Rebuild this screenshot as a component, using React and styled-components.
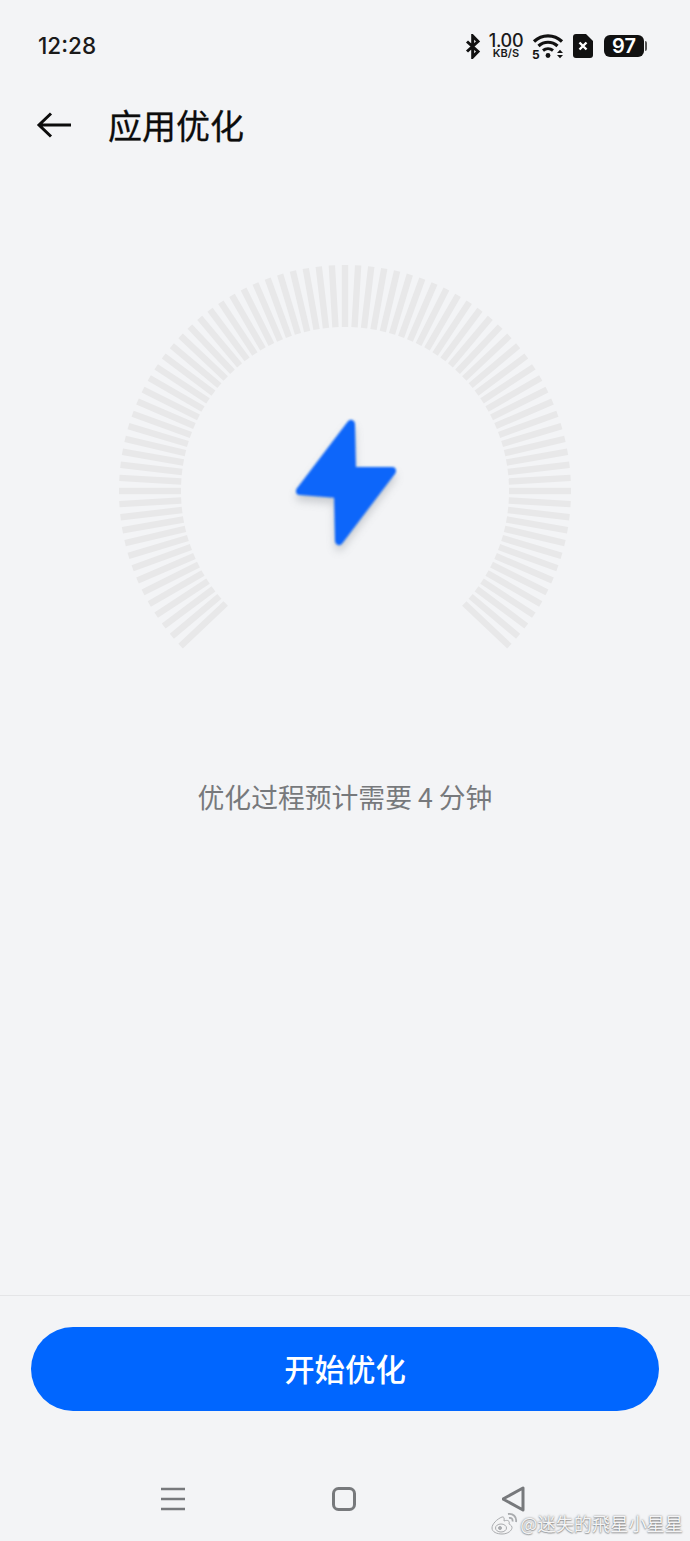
import styled, { createGlobalStyle } from 'styled-components'

const GlobalStyle = createGlobalStyle`
  html, body {
    margin: 0;
    padding: 0;
    background: #f3f4f6;
  }
  * {
    box-sizing: border-box;
  }
`
const Page = styled.div`
  position: relative;
  display: flex;
  flex-direction: column;
  width: 690px;
  height: 1541px;
  overflow: hidden;
  background: #f3f4f6;
  font-family: "Noto Sans CJK SC", "Noto Sans", sans-serif;
`
const StatusBar = styled.div`
  display: flex;
  align-items: center;
  justify-content: space-between;
  height: 92px;
  padding: 0 44px 0 38px;
`
const Time = styled.div`
  padding-bottom: 2px;
  font-family: Inter, Roboto, sans-serif;
  font-size: 22.5px;
  font-weight: 500;
  color: #1a1a1a;
`
const StatusIcons = styled.div`
  display: flex;
  align-items: center;
  gap: 9px;
`
const Speed = styled.div`
  display: flex;
  flex-direction: column;
  align-items: center;
  width: 36px;
  margin: 0 -1px 0 -2px;
  color: #1a1a1a;
  font-family: Inter, Roboto, sans-serif;
`
const SpeedValue = styled.div`
  height: 14px;
  font-size: 18px;
  font-weight: 500;
  line-height: 14px;
  letter-spacing: -0.3px;
`
const SpeedUnit = styled.div`
  height: 10px;
  font-size: 11px;
  font-weight: 600;
  line-height: 10px;
`
const Battery = styled.div`
  position: relative;
  display: flex;
  align-items: center;
  justify-content: center;
  width: 40px;
  height: 22px;
  margin: 0 2px 0 2px;
  border-radius: 6px;
  background: #111;
  color: #fff;
  font-family: Inter, Roboto, sans-serif;
  font-size: 20px;
  font-weight: 600;
  &::after {
    content: '';
    position: absolute;
    right: -3px;
    top: 6px;
    width: 2px;
    height: 10px;
    border-radius: 0 2px 2px 0;
    background: #555;
  }
`
const Header = styled.div`
  display: flex;
  align-items: center;
  gap: 36px;
  height: 66px;
  padding-left: 36px;
`
const BackIcon = styled.svg`
  width: 36px;
  height: 28px;
  flex: none;
`
const Title = styled.h1`
  margin: 0;
  font-size: 34px;
  font-weight: 400;
  line-height: 66px;
  color: #0c0c0c;
  -webkit-text-stroke: 0.3px #0c0c0c;
`
const Gauge = styled.div`
  display: flex;
  justify-content: center;
  margin-top: 102px;
`
const Hint = styled.div`
  margin-top: 117px;
  text-align: center;
  font-size: 26.8px;
  line-height: 40px;
  color: #77797c;
`
const Spacer = styled.div`
  flex: 1;
`
const Footer = styled.div`
  padding: 31px 31px 0;
  border-top: 1px solid #e4e5e7;
`
const StartButton = styled.button`
  display: block;
  width: 100%;
  height: 84px;
  padding: 0 0 2px;
  border: none;
  border-radius: 42px;
  background: #0066ff;
  color: #fff;
  font-family: inherit;
  font-size: 30.4px;
  font-weight: 500;
`
const NavBar = styled.div`
  display: flex;
  align-items: center;
  gap: 145px;
  height: 130px;
  padding: 46px 0 0 160px;
  flex: none;
`
const NavIcon = styled.svg`
  width: 26px;
  height: 26px;
  flex: none;
`
const Watermark = styled.div`
  position: absolute;
  right: 7px;
  bottom: 4px;
  display: flex;
  align-items: center;
  gap: 2px;
  font-size: 18.2px;
  line-height: 28px;
  color: #f4f4f5;
  text-shadow: 0 0 2px rgba(70, 70, 70, 0.75), 0 1px 1px rgba(70, 70, 70, 0.35);
`

// one tick every 3.33deg, with ticks landing on 12 and 9 o'clock
const ticks = Array.from({ length: 81 }, (_, i) => (i - 40) * (10 / 3))
const boltPath = 'M236 164 L237 211 L277 211 L224 281 L223 234 L185 231 Z'

function GaugeDial() {
  return (
    <svg width="460" height="400" viewBox="0 0 460 400">
      {ticks.map((deg) => (
        <rect
          key={deg}
          x="226.800"
          y="5"
          width="6.400"
          height="62"
          fill="#e8e8e9"
          transform={`rotate(${deg} 230 231)`}
        />
      ))}
      <defs>
        <filter id="boltShadow" x="-40%" y="-40%" width="180%" height="180%">
          <feGaussianBlur stdDeviation="4" />
        </filter>
        <filter id="boltSoft" x="-10%" y="-10%" width="120%" height="120%">
          <feGaussianBlur stdDeviation="1" />
        </filter>
      </defs>
      <path
        d={boltPath}
        fill="#8a8f96"
        opacity="0.4"
        stroke="#8a8f96"
        strokeWidth="8"
        strokeLinejoin="round"
        filter="url(#boltShadow)"
        transform="translate(0 6)"
      />
      <path
        d={boltPath}
        fill="#0e66fa"
        stroke="#0e66fa"
        strokeWidth="8"
        strokeLinejoin="round"
        filter="url(#boltSoft)"
      />
    </svg>
  )
}

function App() {
  return (
    <Page>
      <GlobalStyle />
      <StatusBar>
        <Time>12:28</Time>
        <StatusIcons>
          <svg width="16" height="25" viewBox="0 0 16 25" fill="none" stroke="#111" strokeWidth="3">
            <path d="M2 7.500 L13 17.500 L7.700 23 V2 L13 7.500 L2 17.500" />
          </svg>
          <Speed>
            <SpeedValue>1.00</SpeedValue>
            <SpeedUnit>KB/S</SpeedUnit>
          </Speed>
          <svg width="32" height="34" viewBox="0 -4 32 34" fill="none">
            <path d="M2 8.500 C10 1 22 1 30 8.500" stroke="#111" strokeWidth="3.2" />
            <path d="M6.500 13 C12 8 20 8 25.500 13" stroke="#111" strokeWidth="3.2" />
            <path d="M11 17.500 C14 15 18 15 21 17.500" stroke="#111" strokeWidth="3" />
            <circle cx="16" cy="22.500" r="2.400" fill="#111" />
            <path d="M25 20 L28 16.800 L31 20 Z M25 22 L28 25.200 L31 22 Z" fill="#111" />
            <text x="0" y="25.500" fontFamily="Inter, Roboto, sans-serif" fontSize="12" fontWeight="700" fill="#111">5</text>
          </svg>
          <svg width="20" height="24" viewBox="0 0 20 24">
            <path d="M3 0 H13 L20 7 V21 A3 3 0 0 1 17 24 H3 A3 3 0 0 1 0 21 V3 A3 3 0 0 1 3 0 Z" fill="#111" />
            <path d="M6.500 8.500 L13.500 15.500 M13.500 8.500 L6.500 15.500" stroke="#fff" strokeWidth="2.400" />
          </svg>
          <Battery>97</Battery>
        </StatusIcons>
      </StatusBar>
      <Header>
        <BackIcon viewBox="0 0 36 28" fill="none" stroke="#0c0c0c" strokeWidth="3">
          <path d="M35 14 H3 M15 2.500 L3 14 L15 25.500" />
        </BackIcon>
        <Title>应用优化</Title>
      </Header>
      <Gauge>
        <GaugeDial />
      </Gauge>
      <Hint>优化过程预计需要 4 分钟</Hint>
      <Spacer />
      <Footer>
        <StartButton>开始优化</StartButton>
      </Footer>
      <NavBar>
        <NavIcon viewBox="0 0 26 26" stroke="#77797c" strokeWidth="2.6">
          <path d="M1 3 H25 M1 13 H25 M1 23 H25" />
        </NavIcon>
        <NavIcon viewBox="0 0 26 26" fill="none" stroke="#77797c" strokeWidth="3">
          <rect x="2.500" y="2.500" width="21" height="21" rx="5" />
        </NavIcon>
        <NavIcon viewBox="0 0 26 26" fill="none" stroke="#77797c" strokeWidth="3" strokeLinejoin="round">
          <path d="M21 2 V24 L1 13 Z" />
        </NavIcon>
      </NavBar>
      <Watermark>
        <svg width="27" height="24" viewBox="0 0 27 24" fill="#f4f4f5" stroke="#a9abae" strokeWidth="1">
          <path d="M11 6 C6 8 1 13 1 17 C1 21 6 23 11 23 C17 23 21 19.500 21 16.500 C21 14 18 13.500 18 13 C19 10 17 8.500 13 10 C13.500 7 13 5.500 11 6 Z" />
          <ellipse cx="10" cy="17" rx="5.500" ry="4" />
          <circle cx="9" cy="17" r="1.500" fill="#a9abae" />
          <path d="M17 3 C22 2 26 6 25 11 M18 7 C20.500 6.500 22 8 21.500 10.500" fill="none" strokeWidth="1.800" />
        </svg>
        @迷失的飛星小星星
      </Watermark>
    </Page>
  )
}

export default App
